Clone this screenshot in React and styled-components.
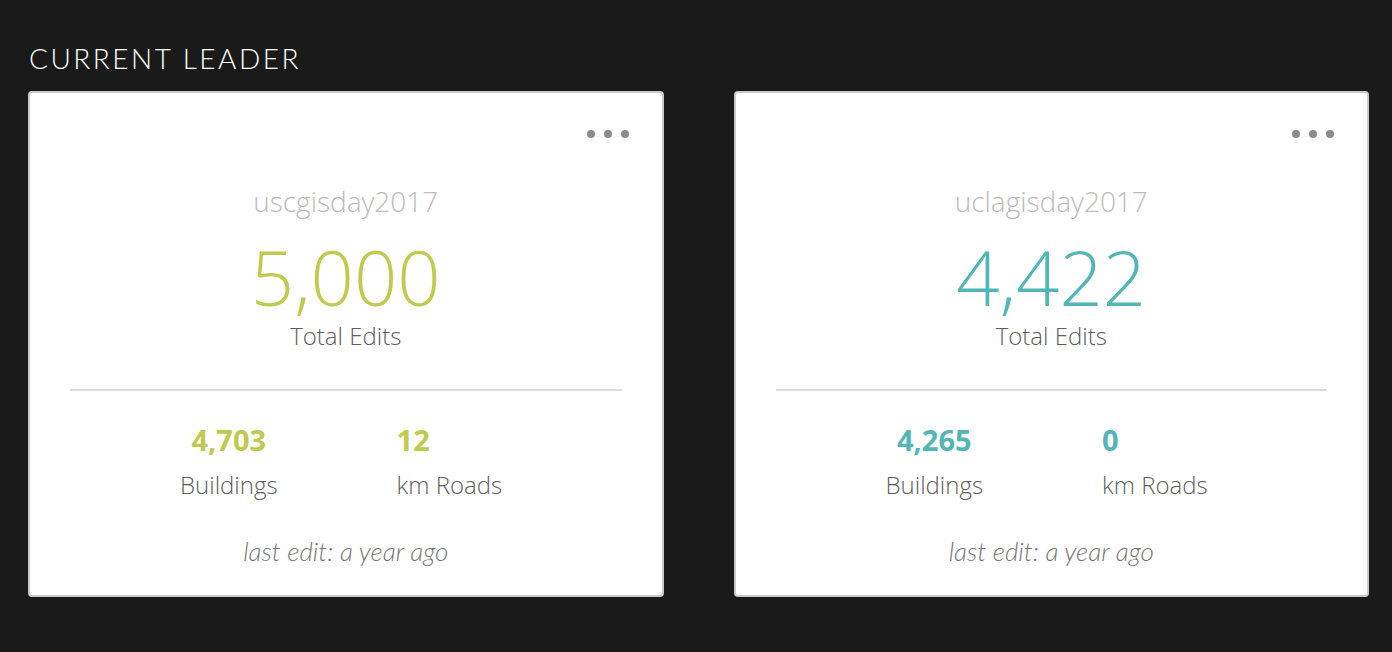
import React from "react";
import styled, { createGlobalStyle } from "styled-components";

const GlobalStyle = createGlobalStyle`
    html, body {
        margin: 0;
        padding: 0;
        background-color: #1a1a1a;
    }
    * {
        box-sizing: border-box;
    }
`;

const Page = styled.div`
    width: 1392px;
    height: 652px;
    padding: 40px 23px 0 28px;
    background-color: #1a1a1a;
`;

const Heading = styled.h2`
    margin: 0 0 15px 1px;
    font-family: Lato, "Open Sans", sans-serif;
    font-weight: 300;
    font-size: 28px;
    line-height: 36px;
    letter-spacing: 2.5px;
    color: #fff;
`;

const CardRow = styled.div`
    display: flex;
    gap: 70px;
`;

const Card = styled.div`
    width: 636px;
    height: 506px;
    border: 2px solid #c9c9c9;
    border-radius: 4px;
    background-color: #fff;
    display: flex;
    flex-direction: column;
    align-items: stretch;
    font-family: "Open Sans", sans-serif;
`;

const CardTop = styled.div`
    display: flex;
    justify-content: flex-end;
    gap: 9px;
    padding: 37px 33px 0 0;
    height: 45px;
`;

const Dot = styled.span`
    width: 8px;
    height: 8px;
    border-radius: 50%;
    background-color: #8c8c8c;
`;

const TeamName = styled.div`
    margin-top: 43px;
    text-align: center;
    font-size: 28px;
    font-weight: 300;
    line-height: 40px;
    color: #bcbcbc;
`;

const BigNumber = styled.div`
    margin-top: 12px;
    text-align: center;
    font-size: 76px;
    font-weight: 300;
    line-height: 88px;
    color: ${(props) => props.color};
`;

const Label = styled.div`
    text-align: center;
    font-size: 24px;
    font-weight: 300;
    line-height: 30px;
    color: #5e5e5e;
`;

const Divider = styled.hr`
    margin: 38px 40px 0 40px;
    border: none;
    height: 2px;
    background-color: #dcdcdc;
`;

const StatRow = styled.div`
    display: flex;
    gap: 119px;
    padding-left: 150px;
    margin-top: 31px;
`;

const Stat = styled.div`
    display: flex;
    flex-direction: column;
    align-items: ${(props) => (props.centered ? "center" : "flex-start")};
`;

const StatValue = styled.div`
    font-size: 29px;
    font-weight: 700;
    line-height: 36px;
    color: ${(props) => props.color};
`;

const StatLabel = styled.div`
    margin-top: 12px;
    font-size: 24px;
    font-weight: 300;
    line-height: 30px;
    color: #5e5e5e;
`;

const LastEdit = styled.div`
    margin-top: 35px;
    text-align: center;
    font-family: Lato, "Open Sans", sans-serif;
    font-style: italic;
    font-weight: 300;
    font-size: 26px;
    line-height: 32px;
    color: #777;
`;

const teams = [
    { name: "uscgisday2017", total: "5,000", buildings: "4,703", roads: "12", color: "#bfca4f" },
    { name: "uclagisday2017", total: "4,422", buildings: "4,265", roads: "0", color: "#52b6b6" },
];

function TeamCard(props) {
    const { team } = props;
    return (
        <Card>
            <CardTop>
                <Dot />
                <Dot />
                <Dot />
            </CardTop>
            <TeamName>{team.name}</TeamName>
            <BigNumber color={team.color}>{team.total}</BigNumber>
            <Label>Total Edits</Label>
            <Divider />
            <StatRow>
                <Stat centered>
                    <StatValue color={team.color}>{team.buildings}</StatValue>
                    <StatLabel>Buildings</StatLabel>
                </Stat>
                <Stat>
                    <StatValue color={team.color}>{team.roads}</StatValue>
                    <StatLabel>km Roads</StatLabel>
                </Stat>
            </StatRow>
            <LastEdit>last edit: a year ago</LastEdit>
        </Card>
    );
}

export default function App() {
    return (
        <>
            <GlobalStyle />
            <Page>
                <Heading>CURRENT LEADER</Heading>
                <CardRow>
                    {teams.map((team) => (
                        <TeamCard key={team.name} team={team} />
                    ))}
                </CardRow>
            </Page>
        </>
    );
}
